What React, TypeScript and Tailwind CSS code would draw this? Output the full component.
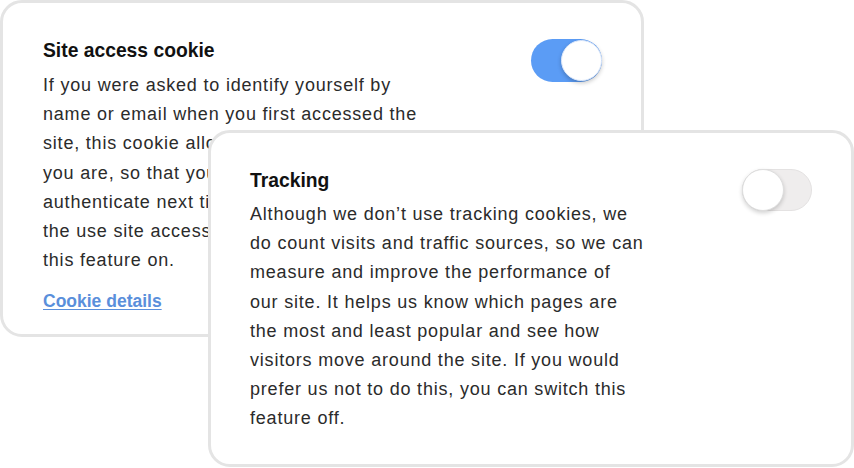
import React from "react";

function Toggle({ on }: { on: boolean }) {
  return on ? (
    <div className="relative h-[43px] w-[71px] shrink-0 rounded-full bg-[#5b9cf5]">
      <div className="absolute right-0 top-[1px] h-[41px] w-[41px] rounded-full border border-[#dce8fb] bg-white shadow-[0_2px_4px_rgba(0,0,0,0.22)]" />
    </div>
  ) : (
    <div className="relative h-[42px] w-[70px] shrink-0 rounded-full border border-[#e4e2e2] bg-[#efeded]">
      <div className="absolute left-[-1px] top-[-1px] h-[42px] w-[42px] rounded-full border border-[#dedede] bg-white shadow-[0_2px_4px_rgba(0,0,0,0.18)]" />
    </div>
  );
}

function Lines({ lines }: { lines: string[] }) {
  return (
    <p className="text-[18px] leading-[29.2px] tracking-[0.8px] text-[#2b2b2b]">
      {lines.map((l, i) => (
        <span key={i} className="block whitespace-nowrap">
          {l}
        </span>
      ))}
    </p>
  );
}

export default function App() {
  return (
    <div
      className="relative h-[468px] w-[854px] overflow-hidden bg-white text-[#222]"
      style={{ fontFamily: '"Liberation Sans", Arial, sans-serif' }}
    >
      <div className="absolute left-0 top-0 flex h-[337px] w-[644px] justify-between rounded-[22px] border-[3px] border-[#e4e4e4] bg-white pl-[40px] pr-[39px] pt-[34px]">
        <div>
          <h2 className="mb-[6px] text-[19.3px] font-bold leading-[28px] text-[#111]">Site access cookie</h2>
          <Lines
            lines={[
              "If you were asked to identify yourself by",
              "name or email when you first accessed the",
              "site, this cookie allows us to remember who",
              "you are, so that you don’t need to",
              "authenticate next time. You can turn off",
              "the use site access cookie by switching",
              "this feature on.",
            ]}
          />
          <a
            href="#"
            className="mt-[12px] inline-block text-[17.5px] font-bold leading-[29px] text-[#5a8fdb] underline underline-offset-2"
          >
            Cookie details
          </a>
        </div>
        <div className="pt-[2px]">
          <Toggle on />
        </div>
      </div>

      <div className="absolute left-[208px] top-[130px] flex h-[337px] w-[646px] justify-between rounded-[22px] border-[3px] border-[#e4e4e4] bg-white pl-[39px] pr-[39px] pt-[34px]">
        <div>
          <h2 className="mb-[5px] text-[19.3px] font-bold leading-[28px] text-[#111]">Tracking</h2>
          <Lines
            lines={[
              "Although we don’t use tracking cookies, we",
              "do count visits and traffic sources, so we can",
              "measure and improve the performance of",
              "our site. It helps us know which pages are",
              "the most and least popular and see how",
              "visitors move around the site. If you would",
              "prefer us not to do this, you can switch this",
              "feature off.",
            ]}
          />
        </div>
        <div className="pt-[2px]">
          <Toggle on={false} />
        </div>
      </div>
    </div>
  );
}
